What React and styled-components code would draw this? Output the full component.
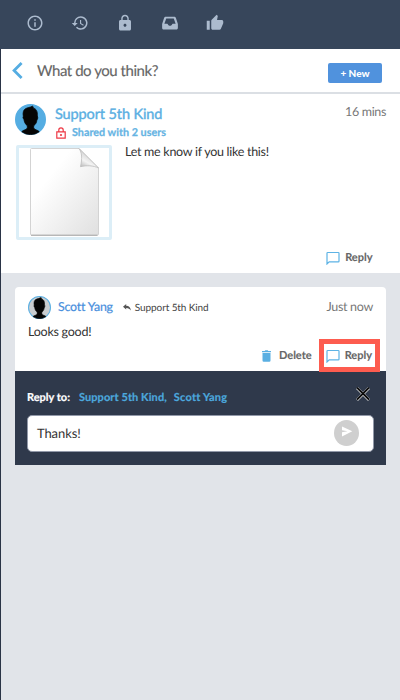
import React from "react";
import styled, { createGlobalStyle } from "styled-components";

const GlobalStyle = createGlobalStyle`
  * { box-sizing: border-box; }
  body { margin: 0; background: #e1e4e9; font-family: Lato, sans-serif; color: #333; text-rendering: geometricPrecision; }
  svg { display: block; flex: none; }
`;

const Page = styled.div`
  width: 400px;
  height: 700px;
  display: flex;
  flex-direction: column;
  background: #e1e4e9;
  overflow: hidden;
`;

const Toolbar = styled.nav`
  height: 49px;
  flex: none;
  display: flex;
  align-items: center;
  padding: 0 0 3px 12.5px;
  background: #37465b;
  color: #acbbce;
`;

const ToolButton = styled.span`
  width: 45px;
  display: flex;
  justify-content: center;
`;

const Content = styled.main`
  flex: 1;
  border-left: 1px solid #2a3446;
`;

const Header = styled.header`
  height: 45px;
  display: flex;
  align-items: center;
  padding: 0 18px 0 11px;
  background: #fff;
  border-bottom: 2px solid #dbdfe4;
`;

const Text = styled.span`
  display: block;
  white-space: nowrap;
  padding-top: ${(p) => p.$drop || 0}px;
  font-size: ${(p) => p.$size || 12}px;
  line-height: ${(p) => p.$line || 16}px;
  font-weight: ${(p) => p.$weight || 400};
  color: ${(p) => p.$color || "#333"};
  letter-spacing: ${(p) => p.$track || 0}px;
  -webkit-text-stroke: ${(p) => p.$stroke || 0}px currentColor;
`;

const Title = styled.h1`
  margin: 0 0 0 14px;
  flex: 1;
  font-size: 15px;
  line-height: 20px;
  font-weight: 400;
  letter-spacing: -0.45px;
  color: #666;
  -webkit-text-stroke: 0.15px currentColor;
`;

const NewButton = styled.button`
  width: 54px;
  height: 20px;
  margin-top: 4px;
  padding: 0;
  border: 0;
  border-radius: 2px;
  background: #5092dd;
  color: #fff;
  font: 900 10px/20px Lato, sans-serif;
`;

const Post = styled.article`
  height: 179px;
  display: flex;
  flex-direction: column;
  padding: 10px 14px 7px 14px;
  background: #fff;
`;

const PostTop = styled.div`
  display: flex;
  height: 41px;
`;

const Author = styled.div`
  flex: 1;
  padding: 0 0 0 9px;
`;

const Shared = styled.div`
  display: flex;
  align-items: center;
  gap: 6px;
  padding-left: 1px;
`;

const PostBody = styled.div`
  display: flex;
  gap: 13px;
  flex: 1;
`;

const Thumbnail = styled.div`
  width: 96px;
  height: 95px;
  border: 3px solid #dceef7;
  border-radius: 2px;
  margin-left: 1px;
`;

const Actions = styled.div`
  display: flex;
  justify-content: flex-end;
  align-items: center;
  padding-top: ${(p) => p.$top || 0}px;
  padding-right: ${(p) => p.$inset}px;
  gap: 14px;
`;

const Action = styled.span`
  display: flex;
  align-items: center;
  gap: ${(p) => p.$gap || 5}px;
`;

const Thread = styled.section`
  padding: 14px 14px 0;
`;

const Comment = styled.article`
  position: relative;
  height: 84px;
  padding: 9px 13px 0;
  border-radius: 4px 4px 0 0;
  background: #fff;
`;

const CommentTop = styled.div`
  display: flex;
  align-items: center;
  height: 22px;
`;

const Highlight = styled.div`
  position: absolute;
  right: 6px;
  bottom: -1px;
  width: 61px;
  height: 33px;
  border: 5px solid #fd5c4f;
`;

const Composer = styled.div`
  height: 94px;
  padding: 14px 12px;
  background: #2f394b;
`;

const Recipients = styled.div`
  display: flex;
  height: 30px;
  padding-right: 4px;
`;

const Field = styled.div`
  height: 37px;
  display: flex;
  align-items: center;
  justify-content: space-between;
  padding: 0 14px 1px 9px;
  border: 1px solid #9299a9;
  border-radius: 5px;
  background: #fff;
`;

const SendButton = styled.span`
  width: 25px;
  height: 26px;
  display: flex;
  align-items: center;
  justify-content: center;
  padding-bottom: 2px;
  border-radius: 50%;
  background: #cfcfcf;
`;

const Spacer = styled.span`
  width: ${(p) => (p.$w ? `${p.$w}px` : "auto")};
  flex: ${(p) => (p.$w ? "none" : "1")};
`;

const toolPaths = [
  "M11 17h2v-6h-2v6zm1-15C6.48 2 2 6.48 2 12s4.48 10 10 10 10-4.48 10-10S17.52 2 12 2zm0 18c-4.41 0-8-3.59-8-8s3.59-8 8-8 8 3.59 8 8-3.59 8-8 8zM11 9h2V7h-2v2z",
  "M13 3a9 9 0 0 0-9 9H1l3.89 3.89.07.14L9 12H6a7 7 0 1 1 2.06 4.94l-1.42 1.42A9 9 0 1 0 13 3zm-1 5v5l4.28 2.54.72-1.21-3.5-2.08V8H12z",
  "M18 8h-1V6c0-2.76-2.24-5-5-5S7 3.24 7 6v2H6c-1.1 0-2 .9-2 2v10c0 1.1.9 2 2 2h12c1.1 0 2-.9 2-2V10c0-1.1-.9-2-2-2zm-6 9c-1.1 0-2-.9-2-2s.9-2 2-2 2 .9 2 2-.9 2-2 2zm3.1-9H8.9V6c0-1.71 1.39-3.1 3.1-3.1s3.1 1.39 3.1 3.1v2z",
  "M6.5 3.5h11c1.2 0 2 .6 2.4 1.7l2.6 8.2v5.1c0 1.2-.8 2-2 2h-17c-1.2 0-2-.8-2-2v-5.1l2.6-8.2c.4-1.1 1.2-1.7 2.4-1.7zM7 6 4.5 13H8c.7 0 1 .4 1.4 1.4.3.7.8 1.1 1.6 1.1h2c.8 0 1.3-.4 1.6-1.1.4-1 .7-1.4 1.4-1.4h3.5L17 6z",
  "M1 21h4V9H1v12zm22-11c0-1.1-.9-2-2-2h-6.31l.95-4.57.03-.32c0-.41-.17-.79-.44-1.06L14.17 1 7.59 7.59C7.22 7.95 7 8.45 7 9v10c0 1.1.9 2 2 2h9c.83 0 1.54-.5 1.84-1.22l3.02-7.05c.09-.23.14-.47.14-.73v-2z",
];

const Avatar = ({ size, fill, ring }) => (
  <svg width={size} height={size} viewBox="0 0 32 32">
    <circle cx="16" cy="16" r="15.3" fill={fill} stroke={ring} strokeWidth="1.4" />
    <path
      d="M7 28.6c1.5-2 5.3-1.7 5.7-4v-2.2c-2.3-1.7-3.2-4.1-3.5-6.7-1-.6-1.2-2-.6-3-.8-3.8.2-6.6 2.2-7.8 2-1.4 5-1.2 7.1-2.7 1.1.4 1 1.2.8 1.8 3.1.8 4.8 3.5 4.3 8.4.8 1.2.6 3.1-.4 4.1-.3 2.5-1.1 4.3-3.3 6v2.1c.4 2.3 4.2 2 5.7 4A15 15 0 0 1 7 28.6z"
      fill="#050505"
      stroke="#050505"
      strokeWidth=".8"
    />
  </svg>
);

const FilePage = () => (
  <svg width="90" height="89" viewBox="0 0 90 89">
    <defs>
      <linearGradient id="sheet" x1="0" y1="0" x2="1" y2="1">
        <stop offset="0.3" stopColor="#fff" />
        <stop offset="1" stopColor="#e0e0e0" />
      </linearGradient>
      <linearGradient id="fold" x1="0.6" y1="0.3" x2="0.2" y2="1">
        <stop offset="0" stopColor="#d0d0d0" />
        <stop offset="0.55" stopColor="#f4f4f4" />
        <stop offset="1" stopColor="#bbb" />
      </linearGradient>
    </defs>
    <path d="M12.5.5H60l19.5 19.5v66q0 1-1 1H12.5q-1 0-1-1V1.5q0-1 1-1z" fill="url(#sheet)" stroke="#d3d3d3" />
    <path d="M12 87.3h66.5" stroke="#aaa" />
    <path d="M60 .5c3 4 3.4 10 1.5 18.2 6-1.5 13-1.2 18 1.3z" fill="url(#fold)" stroke="#bdbdbd" strokeWidth=".8" />
  </svg>
);

const ReplyAction = () => (
  <Action>
    <svg width="14" height="14" viewBox="0 0 14 14" fill="none" stroke="#5db3e5">
      <path d="M1 13V2.2Q1 1.5 1.7 1.5h10.6q.7 0 .7.7v8q0 .7-.7.7H3.2z" strokeWidth="1.2" />
    </svg>
    <Text $size={11} $weight={700} $color="#666" $stroke={0.1}>Reply</Text>
  </Action>
);

export default function App() {
  return (
    <Page>
      <GlobalStyle />
      <Toolbar>
        {toolPaths.map((d, i) => (
          <ToolButton key={i}>
            <svg width="18" height="18" viewBox="0 0 24 24" fill="currentColor" fillRule="evenodd"><path d={d} /></svg>
          </ToolButton>
        ))}
      </Toolbar>
      <Content>
        <Header>
          <svg width="11" height="17" viewBox="0 0 11 17" fill="none" stroke="#55ade2" strokeWidth="2.8">
            <path d="M9.6 1 2.1 8.5l7.5 7.5" />
          </svg>
          <Title>What do you think?</Title>
          <NewButton>+ New</NewButton>
        </Header>
        <Post>
          <PostTop>
            <Avatar size={31} fill="#55ade2" ring="#55ade2" />
            <Author>
              <Text $size={14.5} $line={19} $drop={1} $track={-0.12} $color="#5aafe2" $stroke={0.4}>Support 5th Kind</Text>
              <Shared>
                <svg width="10" height="12" viewBox="0 0 10 12" fill="none" stroke="#ee3945" strokeWidth="1.2">
                  <path d="M.8 4.8h8.4v6.4H.8zM2.8 4.8V3a2.2 2.2 0 0 1 4.4 0v1.8" /><circle cx="5" cy="8" r=".5" />
                </svg>
                <Text $size={10.8} $drop={1} $weight={700} $color="#66b4e3" $stroke={0.25}>Shared with 2 users</Text>
              </Shared>
            </Author>
            <Text $size={12.5} $track={-0.35} $color="#777">16 mins</Text>
          </PostTop>
          <PostBody>
            <Thumbnail><FilePage /></Thumbnail>
            <Text $size={12.5} $line={14} $track={-0.28}>Let me know if you like this!</Text>
          </PostBody>
          <Actions $inset={13.5}><ReplyAction /></Actions>
        </Post>
        <Thread>
          <Comment>
            <CommentTop>
              <Avatar size={23} fill="#c9cdd0" ring="#5aafe2" />
              <Spacer $w={7} />
              <Text $size={12.4} $track={-0.2} $color="#4a90dd" $stroke={0.2}>Scott Yang</Text>
              <Spacer $w={10} />
              <svg width="8" height="7" viewBox="0 0 8 7" fill="#555"><path d="M0 2.8 3.2 0v1.8C6 1.9 7.4 3.5 8 6.5 6.8 4.7 5.4 3.9 3.2 3.9v1.7z" /></svg>
              <Spacer $w={4} />
              <Text $size={10} $drop={2} $track={-0.1} $color="#444">Support 5th Kind</Text>
              <Spacer />
              <Text $size={12.5} $track={-0.3} $color="#777">Just now</Text>
            </CommentTop>
            <Text $size={12.5} $track={-0.25} $line={28}>Looks good!</Text>
            <Actions $inset={1} $top={2}>
              <Action $gap={8}>
                <svg width="9" height="12" viewBox="0 0 9 12" fill="#5aafe2"><path d="M0 1h2.7L3.3.2h2.4l.6.8H9v1.3H0zM.5 3h8v7.6q0 1.2-1.2 1.2H1.7Q.5 11.8.5 10.6z" /></svg>
                <Text $size={11} $weight={700} $color="#666" $stroke={0.1}>Delete</Text>
              </Action>
              <ReplyAction />
            </Actions>
            <Highlight />
          </Comment>
          <Composer>
            <Recipients>
              <Text $size={11} $line={24} $drop={1} $weight={700} $color="#fff" $stroke={0.2}>Reply to:</Text>
              <Spacer $w={9} />
              <Text $size={11} $line={24} $drop={1} $track={0.08} $weight={700} $color="#4ca8dd" $stroke={0.2}>Support 5th Kind,</Text>
              <Spacer $w={7} />
              <Text $size={11} $line={24} $drop={1} $track={0.2} $weight={700} $color="#4ca8dd" $stroke={0.2}>Scott Yang</Text>
              <Spacer />
              <svg width="14" height="18" viewBox="0 0 14 18" fill="none">
                <path d="M1 3l12 12M13 3 1 15" stroke="#d5d5d5" strokeWidth="2.8" />
                <path d="M1 2.6l12 12M13 2.6 1 14.6" stroke="#080808" strokeWidth="1.7" />
              </svg>
            </Recipients>
            <Field>
              <Text $size={13} $track={-0.1}>Thanks!</Text>
              <SendButton>
                <svg width="12" height="12" viewBox="0 0 12 12" fill="#fff"><path d="M1 .5 11.3 5.2 1 10.5V6.2L6.5 5.2 1 4.3z" /></svg>
              </SendButton>
            </Field>
          </Composer>
        </Thread>
      </Content>
    </Page>
  );
}
